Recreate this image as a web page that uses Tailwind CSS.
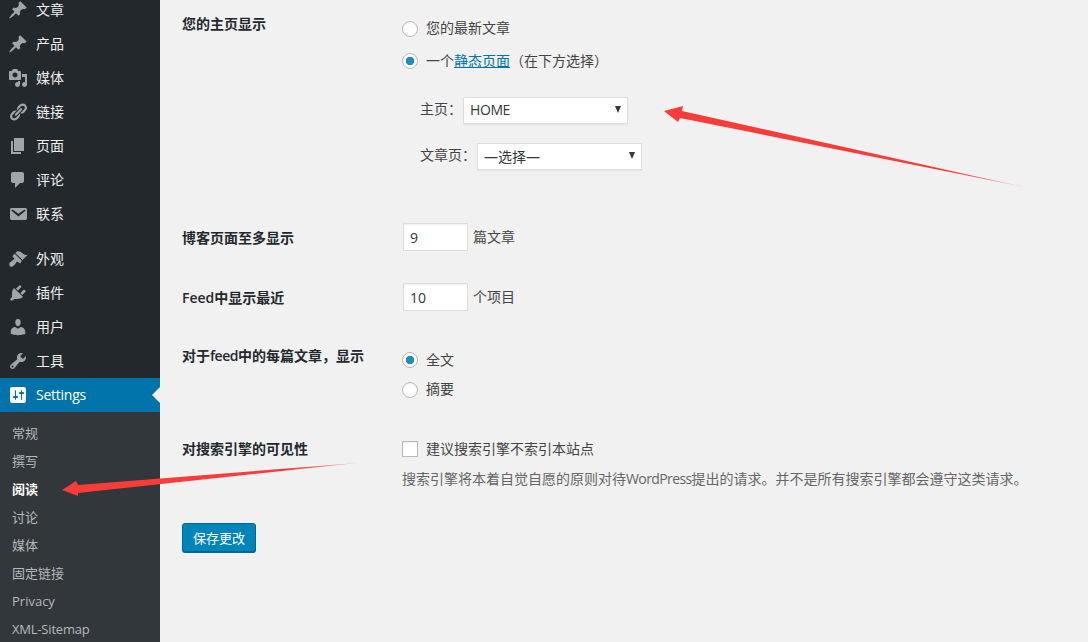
<!DOCTYPE html>
<html lang="zh-CN">
<head>
    <meta charset="UTF-8">
    <meta name="viewport" content="width=device-width, initial-scale=1.0">
    <title>阅读设置</title>
    <script src="https://cdn.jsdelivr.net/npm/@tailwindcss/browser@4"></script>
</head>
<body class="relative flex h-[642px] overflow-hidden bg-[#f1f1f1] font-['Open_Sans','Noto_Sans_CJK_SC',sans-serif] text-[14px] leading-[20px] text-[#444]">

    <!-- sidebar -->
    <nav class="h-full w-[160px] shrink-0 overflow-hidden bg-[#23282d] text-[#eee]">
        <ul class="-mt-[7px]">
            <li class="flex h-[34px] items-center gap-[8px] pl-[8px]"><svg class="h-[20px] w-[20px] fill-[#a0a5aa]" viewBox="0 0 20 20"><path d="M10.44 3.02l1.82-1.82 6.36 6.35-1.83 1.82c-1.05-.68-2.48-.57-3.41.36l-.75.75c-.92.93-1.04 2.35-.35 3.41l-1.83 1.82-2.41-2.41-2.8 2.79c-.42.42-3.38 2.71-3.8 2.29s1.86-3.39 2.28-3.81l2.79-2.79L4.1 9.36l1.83-1.82c1.05.69 2.48.57 3.4-.36l.75-.75c.93-.92 1.05-2.35.36-3.41z"/></svg>文章</li>
            <li class="flex h-[34px] items-center gap-[8px] pl-[8px]"><svg class="h-[20px] w-[20px] fill-[#a0a5aa]" viewBox="0 0 20 20"><path d="M10.44 3.02l1.82-1.82 6.36 6.35-1.83 1.82c-1.05-.68-2.48-.57-3.41.36l-.75.75c-.92.93-1.04 2.35-.35 3.41l-1.83 1.82-2.41-2.41-2.8 2.79c-.42.42-3.38 2.71-3.8 2.29s1.86-3.39 2.28-3.81l2.79-2.79L4.1 9.36l1.83-1.82c1.05.69 2.48.57 3.4-.36l.75-.75c.93-.92 1.05-2.35.36-3.41z"/></svg>产品</li>
            <li class="flex h-[34px] items-center gap-[8px] pl-[8px]"><svg class="h-[20px] w-[20px] fill-[#a0a5aa]" viewBox="0 0 20 20"><path d="M13 11V4c0-.55-.45-1-1-1h-1.67L9 1H5L3.67 3H2c-.55 0-1 .45-1 1v7c0 .55.45 1 1 1h10c.55 0 1-.45 1-1zM7 4.5c1.38 0 2.5 1.12 2.5 2.5S8.38 9.5 7 9.5 4.5 8.38 4.5 7 5.62 4.5 7 4.5zM14 6h5v10.5c0 1.38-1.12 2.5-2.5 2.5S14 17.88 14 16.5s1.12-2.5 2.5-2.5c.17 0 .34.02.5.05V9h-3V6zm-4 8.05V13h2v3.5c0 1.38-1.12 2.5-2.5 2.5S7 17.88 7 16.5 8.12 14 9.5 14c.17 0 .34.02.5.05z"/></svg>媒体</li>
            <li class="flex h-[34px] items-center gap-[8px] pl-[8px]"><svg class="h-[20px] w-[20px] fill-[#a0a5aa]" viewBox="0 0 20 20"><path d="M17.74 2.76c1.68 1.69 1.68 4.41 0 6.1l-1.53 1.52c-1.12 1.12-2.7 1.47-4.14 1.09l2.62-2.61.76-.77.76-.76c.84-.84.84-2.2 0-3.04-.84-.85-2.2-.85-3.04 0l-.77.76-3.38 3.38c-.37-1.44-.02-3.02 1.1-4.14l1.52-1.53c1.69-1.68 4.42-1.68 6.1 0zM8.59 13.43l5.34-5.34c.42-.42.42-1.1 0-1.52-.44-.43-1.13-.39-1.53 0l-5.33 5.34c-.42.42-.42 1.1 0 1.52.44.43 1.13.39 1.52 0zm-.76 2.29l4.14-4.15c.38 1.44.03 3.02-1.09 4.14l-1.52 1.53c-1.69 1.68-4.41 1.68-6.1 0-1.68-1.68-1.68-4.42 0-6.1l1.53-1.52c1.12-1.12 2.7-1.47 4.14-1.1l-4.14 4.15c-.85.84-.85 2.2 0 3.05.84.84 2.2.84 3.04 0z"/></svg>链接</li>
            <li class="flex h-[34px] items-center gap-[8px] pl-[8px]"><svg class="h-[20px] w-[20px] fill-[#a0a5aa]" viewBox="0 0 20 20"><path d="M6 15V2h10v13H6zm-1 1h8v2H3V5h2v11z"/></svg>页面</li>
            <li class="flex h-[34px] items-center gap-[8px] pl-[8px]"><svg class="h-[20px] w-[20px] fill-[#a0a5aa]" viewBox="0 0 20 20"><path d="M5 2h9c1.1 0 2 .9 2 2v7c0 1.1-.9 2-2 2h-2l-5 5v-5H5c-1.1 0-2-.9-2-2V4c0-1.1.9-2 2-2z"/></svg>评论</li>
            <li class="flex h-[34px] items-center gap-[8px] pl-[8px]"><svg class="h-[20px] w-[20px] fill-[#a0a5aa]" viewBox="0 0 20 20"><path d="M3.87 4h13.25C18.37 4 19 4.59 19 5.79v8.42c0 1.19-.63 1.79-1.88 1.79H3.87c-1.25 0-1.88-.6-1.88-1.79V5.79c0-1.2.63-1.79 1.88-1.79zm6.62 8.6l6.74-5.53c.24-.2.43-.66.13-1.07-.29-.41-.82-.42-1.17-.17l-5.7 3.86L4.8 5.83c-.35-.25-.88-.24-1.17.17-.3.41-.11.87.13 1.07z"/></svg>联系</li>
        </ul>
        <ul class="mt-[11px]">
            <li class="flex h-[34px] items-center gap-[8px] pl-[8px]"><svg class="h-[20px] w-[20px] fill-[#a0a5aa]" viewBox="0 0 20 20"><path d="M14.48 11.06L7.41 3.99l1.5-1.5c.5-.56 2.3-.47 3.51.32 1.21.8 1.43 1.28 2.91 2.1 1.18.64 2.45 1.26 4.45.85zm-.71.71L6.7 4.7 4.93 6.47c-.39.39-.39 1.02 0 1.41l1.06 1.06c.39.39.39 1.03 0 1.42-.6.6-1.43 1.11-2.21 1.69-.35.26-.7.53-1.01.84C1.43 13.1.67 15.06 1.8 17.2c1.13 1.1 3.1.3 4.4-1 .31-.31.58-.66.84-1.01.58-.78 1.09-1.61 1.69-2.21.39-.39 1.03-.39 1.42 0l1.06 1.06c.39.39 1.02.39 1.41 0z"/></svg>外观</li>
            <li class="flex h-[34px] items-center gap-[8px] pl-[8px]"><svg class="h-[20px] w-[20px] fill-[#a0a5aa]" viewBox="0 0 20 20"><path d="M13.11 4.36L9.87 7.6 8 5.73l3.24-3.24c.35-.34 1.05-.2 1.56.32.52.51.66 1.21.31 1.55zm-8 1.77l.91-1.12 9.01 9.01-1.19.84c-.71.71-2.63 1.16-3.82 1.16H6.14L4.9 17.26c-.59.59-1.54.59-2.12 0-.59-.58-.59-1.53 0-2.12l1.24-1.24v-3.88c0-1.13.4-3.19 1.09-3.89zm7.26 3.97l3.24-3.24c.34-.35 1.04-.21 1.55.31.52.51.66 1.21.31 1.55l-3.24 3.25z"/></svg>插件</li>
            <li class="flex h-[34px] items-center gap-[8px] pl-[8px]"><svg class="h-[20px] w-[20px] fill-[#a0a5aa]" viewBox="0 0 20 20"><path d="M10 9.25c-2.27 0-2.73-3.44-2.73-3.44C7 4.02 7.82 2 9.97 2c2.16 0 2.98 2.02 2.71 3.81 0 0-.41 3.44-2.68 3.44zm0 2.57L12.72 10c2.39 0 4.52 2.33 4.52 4.53v2.49s-3.65 1.13-7.24 1.13c-3.65 0-7.24-1.13-7.24-1.13v-2.49c0-2.25 1.94-4.48 4.47-4.48z"/></svg>用户</li>
            <li class="flex h-[34px] items-center gap-[8px] pl-[8px]"><svg class="h-[20px] w-[20px] fill-[#a0a5aa]" viewBox="0 0 20 20"><path d="M16.68 9.77c-1.34 1.34-3.3 1.67-4.95.99l-5.41 6.52c-.99.99-2.59.99-3.58 0s-.99-2.59 0-3.57l6.52-5.42c-.68-1.65-.35-3.61.99-4.95 1.28-1.28 3.12-1.62 4.72-1.06l-2.89 2.89 2.82 2.82 2.86-2.87c.53 1.58.18 3.39-1.08 4.65zM3.81 16.21c.4.39 1.04.39 1.43 0 .4-.4.4-1.04 0-1.43-.39-.4-1.03-.4-1.43 0-.39.39-.39 1.03 0 1.43z"/></svg>工具</li>
            <li class="relative flex h-[34px] items-center gap-[8px] bg-[#0073aa] pl-[8px] text-white"><svg class="h-[20px] w-[20px] fill-white" viewBox="0 0 20 20"><path d="M18 16V4c0-1.1-.9-2-2-2H4c-1.1 0-2 .9-2 2v12c0 1.1.9 2 2 2h12c1.1 0 2-.9 2-2zM8 11h1c.55 0 1 .45 1 1s-.45 1-1 1H8v1.5c0 .28-.22.5-.5.5s-.5-.22-.5-.5V13H6c-.55 0-1-.45-1-1s.45-1 1-1h1V5.5c0-.28.22-.5.5-.5s.5.22.5.5V11zm5-2h-1c-.55 0-1-.45-1-1s.45-1 1-1h1V5.5c0-.28.22-.5.5-.5s.5.22.5.5V7h1c.55 0 1 .45 1 1s-.45 1-1 1h-1v5.5c0 .28-.22.5-.5.5s-.5-.22-.5-.5V9z"/></svg><span class="tracking-[-0.25px]">Settings</span><span class="absolute right-0 top-[9px] h-0 w-0 border-y-[8px] border-r-[8px] border-y-transparent border-r-[#f1f1f1]"></span></li>
        </ul>
        <ul class="h-[240px] bg-[#32373c] pt-[7px] text-[13px] text-[#b4b9be]">
            <li class="flex h-[28px] items-center pl-[12px]">常规</li>
            <li class="flex h-[28px] items-center pl-[12px]">撰写</li>
            <li class="flex h-[28px] items-center pl-[12px] font-semibold text-white">阅读</li>
            <li class="flex h-[28px] items-center pl-[12px]">讨论</li>
            <li class="flex h-[28px] items-center pl-[12px]">媒体</li>
            <li class="flex h-[28px] items-center pl-[12px]">固定链接</li>
            <li class="flex h-[28px] items-center pl-[12px]">Privacy</li>
            <li class="flex h-[28px] items-center pl-[12px] tracking-[-0.2px]">XML-Sitemap</li>
        </ul>
    </nav>

    <!-- settings form -->
    <main class="flex-1 pl-[22px] pt-[14px]">
        <div class="grid grid-cols-[220px_1fr]">
            <div class="font-semibold text-[#23282d]">您的主页显示</div>
            <div class="mt-[5px]">
                <label class="flex h-[20px] items-center gap-[8px]"><input type="radio" name="front" class="h-[16px] w-[16px] appearance-none rounded-full border border-[#b4b9be] bg-white shadow-[inset_0_1px_2px_rgba(0,0,0,0.07)]"><span class="pb-[2px]">您的最新文章</span></label>
                <label class="mt-[12px] flex h-[20px] items-center gap-[8px]"><input type="radio" name="front" checked class="h-[16px] w-[16px] appearance-none rounded-full border border-[#b4b9be] bg-[radial-gradient(circle,#1e8cbe_4px,#fff_4.5px)]"><span>一个<a href="#" class="text-[#0073aa] underline">静态页面</a>（在下方选择）</span></label>
                <div class="ml-[18px] mt-[26px] flex items-center gap-px">
                    <span class="pb-[3px]">主页：</span>
                    <div class="relative">
                        <select class="h-[27px] w-[165px] appearance-none border border-[#ddd] bg-white pb-[2px] pl-[6px] text-[14px] tracking-[-0.4px] text-[#32373c] shadow-[0_1px_1px_rgba(0,0,0,0.04)]"><option>HOME</option></select>
                        <span class="absolute right-[7px] top-[9px] h-0 w-0 border-x-[3px] border-t-[7px] border-x-transparent border-t-[#32373c]"></span>
                    </div>
                </div>
                <div class="ml-[18px] mt-[19px] flex items-center gap-px">
                    <span class="pb-[3px]">文章页：</span>
                    <div class="relative">
                        <select class="h-[27px] w-[165px] appearance-none border border-[#ddd] bg-white pl-[6px] text-[14px] text-[#32373c] shadow-[0_1px_1px_rgba(0,0,0,0.04)]"><option>—选择—</option></select>
                        <span class="absolute right-[7px] top-[9px] h-0 w-0 border-x-[3px] border-t-[7px] border-x-transparent border-t-[#32373c]"></span>
                    </div>
                </div>
            </div>
        </div>

        <div class="mt-[53px] grid grid-cols-[220px_1fr]">
            <div class="mt-[5px] font-semibold text-[#23282d]">博客页面至多显示</div>
            <div class="flex items-center gap-[5px] pl-px">
                <input type="text" value="9" class="h-[28px] w-[65px] border border-[#ddd] bg-white pl-[6px] text-[#32373c] shadow-[inset_0_1px_2px_rgba(0,0,0,0.07)]">
                <span>篇文章</span>
            </div>
        </div>

        <div class="mt-[32px] grid grid-cols-[220px_1fr]">
            <div class="mt-[5px] font-semibold text-[#23282d]">Feed中显示最近</div>
            <div class="flex items-center gap-[5px] pl-px">
                <input type="text" value="10" class="h-[28px] w-[65px] border border-[#ddd] bg-white pl-[6px] text-[#32373c] shadow-[inset_0_1px_2px_rgba(0,0,0,0.07)]">
                <span>个项目</span>
            </div>
        </div>

        <div class="mt-[35px] grid grid-cols-[220px_1fr]">
            <div class="font-semibold text-[#23282d]">对于<span class="tracking-[-0.5px]">feed</span>中的每篇文章，显示</div>
            <div class="mt-[4px]">
                <label class="flex h-[20px] items-center gap-[8px]"><input type="radio" name="feed" checked class="h-[16px] w-[16px] appearance-none rounded-full border border-[#b4b9be] bg-[radial-gradient(circle,#1e8cbe_4px,#fff_4.5px)]">全文</label>
                <label class="mt-[10px] flex h-[20px] items-center gap-[8px]"><input type="radio" name="feed" class="h-[16px] w-[16px] appearance-none rounded-full border border-[#b4b9be] bg-white shadow-[inset_0_1px_2px_rgba(0,0,0,0.07)]"><span class="pb-[2px]">摘要</span></label>
            </div>
        </div>

        <div class="mt-[39px] grid grid-cols-[220px_1fr]">
            <div class="font-semibold text-[#23282d]">对搜索引擎的可见性</div>
            <div>
                <label class="flex h-[20px] items-center gap-[8px]"><input type="checkbox" class="h-[16px] w-[16px] appearance-none border border-[#b4b9be] bg-white shadow-[inset_0_1px_2px_rgba(0,0,0,0.07)]">建议搜索引擎不索引本站点</label>
                <p class="mt-[10px] text-[#666]">搜索引擎将本着自觉自愿的原则对待<span class="tracking-[-0.6px]">WordPress</span>提出的请求。并不是所有搜索引擎都会遵守这类请求。</p>
            </div>
        </div>

        <button class="mt-[34px] h-[29px] w-[74px] rounded-[3px] border border-[#006799] bg-[#0085ba] text-[13px] text-white shadow-[0_1px_0_#006799]">保存更改</button>
    </main>

    <!-- annotation arrows drawn over the screenshot -->
    <svg class="pointer-events-none absolute left-0 top-0 h-[642px] w-[1088px]" viewBox="0 0 1088 642">
        <defs>
            <linearGradient id="fadeA" gradientUnits="userSpaceOnUse" x1="664" y1="111" x2="1024" y2="187">
                <stop offset="0.75" stop-color="#f73c3a"/>
                <stop offset="1" stop-color="#f73c3a" stop-opacity="0.6"/>
            </linearGradient>
            <linearGradient id="fadeB" gradientUnits="userSpaceOnUse" x1="62" y1="490" x2="357" y2="463">
                <stop offset="0.75" stop-color="#f73c3a"/>
                <stop offset="1" stop-color="#f73c3a" stop-opacity="0.4"/>
            </linearGradient>
        </defs>
        <polygon fill="url(#fadeA)" points="664,111 683,106 682,111 1024,187 680,118 678,122"/>
        <polygon fill="url(#fadeB)" points="62,490 76,481 78,485 357,463 78,493 78,496"/>
    </svg>
</body>
</html>
